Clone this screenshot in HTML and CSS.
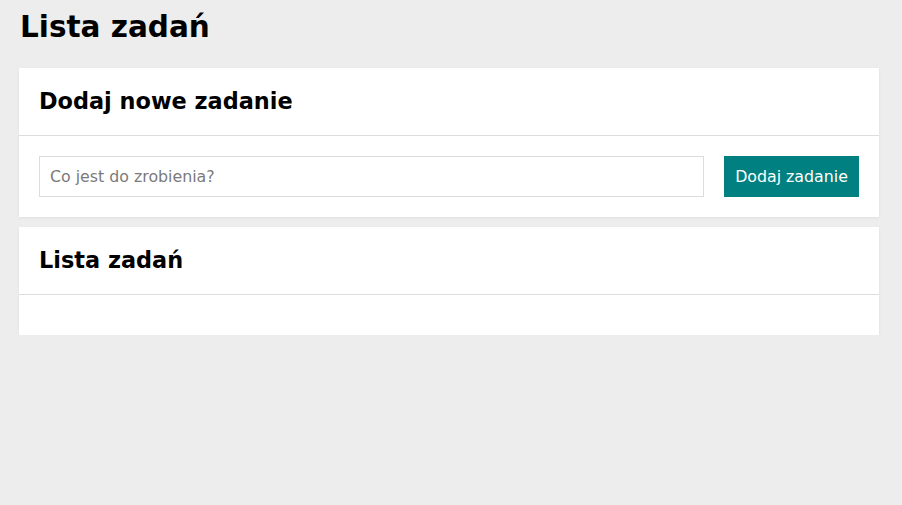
FILE: index.html
```html
<!DOCTYPE html>
<html lang="pl">
<head>
<meta charset="utf-8">
<title>Lista zadań</title>
<link rel="stylesheet" href="styles.css">
</head>
<body>
<main class="app">
  <h1 class="page-title">Lista zadań</h1>
  <section class="card">
    <header class="card-header"><h2 class="card-title">Dodaj nowe zadanie</h2></header>
    <div class="card-body add-form">
      <input class="task-input" type="text" placeholder="Co jest do zrobienia?">
      <button class="btn-add" type="button">Dodaj zadanie</button>
    </div>
  </section>
  <section class="card">
    <header class="card-header"><h2 class="card-title">Lista zadań</h2></header>
    <div class="card-body task-list"></div>
  </section>
</main>
</body>
</html>
```
FILE: styles.css
```css
* { box-sizing: border-box; }
html, body { margin: 0; padding: 0; }
body {
  background: #ededed;
  font-family: "DejaVu Sans", "Open Sans", sans-serif;
  color: #000;
}
.app {
  padding: 0 23px 0 19px;
  display: flex;
  flex-direction: column;
  gap: 10px;
}
.page-title {
  margin: 7px 0 11px 1px;
  font-size: 29.5px;
  line-height: 40px;
  font-weight: 700;
}
.card {
  background: #fff;
  box-shadow: 0 1px 3px rgba(0,0,0,0.06);
}
.card-header {
  padding: 20px;
  border-bottom: 1px solid #dddddd;
}
.card-title {
  margin: 0;
  font-size: 22.4px;
  line-height: 27px;
  font-weight: 700;
}
.card-body {
  padding: 20px;
}
.add-form {
  display: flex;
  gap: 20px;
}
.task-input {
  flex: 1;
  height: 41px;
  border: 1px solid #dcdcdc;
  padding: 0 10px;
  font: inherit;
  font-size: 15.8px;
  color: #333;
  outline: none;
}
.task-input::placeholder { color: #7a7a7a; }
.btn-add {
  height: 41px;
  width: 135px;
  border: none;
  background: #008080;
  color: #fff;
  font: inherit;
  font-size: 15.8px;
  cursor: pointer;
}
.task-list { min-height: 40px; padding: 0; }
```
